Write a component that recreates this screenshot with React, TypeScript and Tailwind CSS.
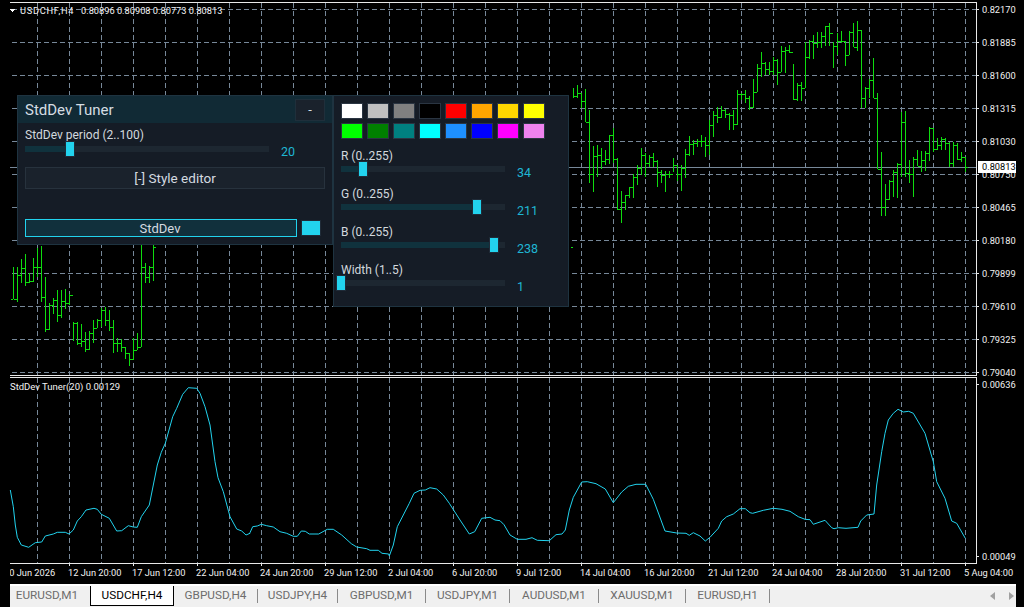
const swatches = [
  "bg-[#ffffff]", "bg-[#c0c0c0]", "bg-[#808080]", "bg-[#000000]", "bg-[#ff0000]", "bg-[#ffa500]", "bg-[#ffd700]", "bg-[#ffff00]",
  "bg-[#00ff00]", "bg-[#008000]", "bg-[#008080]", "bg-[#00ffff]", "bg-[#1e90ff]", "bg-[#0000ff]", "bg-[#ff00ff]", "bg-[#ee82ee]",
];

const prices = ["0.82170", "0.81885", "0.81600", "0.81315", "0.81030", "0.80750", "0.80465", "0.80180", "0.79899", "0.79610", "0.79325", "0.79040"];

const times = [
  "10 Jun 2026", "12 Jun 20:00", "17 Jun 12:00", "22 Jun 04:00", "24 Jun 20:00", "29 Jun 12:00", "2 Jul 04:00", "6 Jul 20:00",
  "9 Jul 12:00", "14 Jul 04:00", "16 Jul 20:00", "21 Jul 12:00", "24 Jul 04:00", "28 Jul 20:00", "31 Jul 12:00", "5 Aug 04:00",
];

const tabs = [
  { name: "EURUSD,M1", width: "w-[80px] pr-[6px]" },
  { name: "USDCHF,H4", width: "w-[84px]", active: true },
  { name: "GBPUSD,H4", width: "w-[84px]", sep: true },
  { name: "USDJPY,H4", width: "w-[80px]", sep: true },
  { name: "GBPUSD,M1", width: "w-[88px]", sep: true },
  { name: "USDJPY,M1", width: "w-[84px]", sep: true },
  { name: "AUDUSD,M1", width: "w-[89px]", sep: true },
  { name: "XAUUSD,M1", width: "w-[87px]", sep: true },
  { name: "EURUSD,H1", width: "w-[84px]", sep: true },
];

// bars traced from 3x crops: [x, high, low, close]
const trace = (ox: number, oy: number, rows: number[][]) =>
  rows.map(([x, h, l, c]) => [Math.round(ox + x / 3), Math.round(oy + h / 3), Math.round(oy + l / 3), Math.round(oy + c / 3)]);

const bars = [
  ...trace(0, 240, [
    [40, 80, 178, 178], [52, 80, 185, 105], [64, 57, 128, 85], [76, 42, 137, 125], [88, 100, 130, 122], [100, 55, 125, 82],
    [112, 25, 110, 80], [124, 18, 185, 172], [136, 110, 275, 268], [148, 190, 270, 195], [160, 175, 222, 180], [172, 150, 245, 225],
    [184, 150, 235, 182], [196, 147, 208, 188], [208, 162, 195, 165], [220, 245, 302, 248], [232, 247, 315, 310], [244, 252, 322, 302],
    [256, 277, 337, 328], [268, 272, 330, 280], [280, 240, 310, 263], [292, 238, 265, 240], [304, 205, 260, 210], [316, 200, 258, 240],
    [328, 210, 272, 262], [340, 240, 338, 308], [352, 295, 335, 308], [364, 298, 335, 322], [376, 322, 358, 340], [388, 338, 378, 358],
    [400, 295, 360, 330], [412, 278, 330, 320], [424, 15, 320, 82], [436, 68, 128, 112], [448, 78, 128, 82], [460, 15, 122, 20],
  ]),
  ...trace(570, 20, [
    [10, 205, 235, 228], [22, 195, 235, 220], [34, 220, 265, 243], [46, 207, 307, 307], [58, 270, 490, 462], [70, 378, 515, 408],
    [82, 375, 470, 406], [94, 385, 447, 423], [106, 390, 435, 418], [118, 345, 432, 345], [130, 325, 430, 418], [142, 415, 570, 567],
    [154, 513, 608, 545], [166, 525, 570, 525], [178, 500, 533, 502], [190, 462, 533, 472], [202, 435, 495, 445], [214, 385, 465, 405],
    [226, 400, 470, 428], [238, 405, 440, 412], [250, 400, 440, 422], [262, 420, 500, 455], [274, 450, 488, 465], [286, 453, 515, 462],
    [298, 452, 475, 462], [310, 415, 455, 435], [322, 435, 483, 463], [334, 435, 513, 445], [346, 388, 475, 403], [358, 348, 407, 372],
    [370, 360, 405, 370], [382, 357, 380, 362], [394, 345, 380, 362], [406, 350, 410, 376], [418, 300, 405, 316], [430, 273, 350, 286],
    [442, 262, 310, 290], [454, 258, 295, 270], [466, 268, 295, 282], [478, 280, 330, 285], [490, 270, 330, 312], [502, 210, 315, 222],
    [514, 220, 240, 222], [526, 210, 250, 235], [538, 228, 270, 260], [550, 178, 265, 215], [562, 133, 215, 145], [574, 97, 170, 130],
    [586, 125, 165, 148], [598, 125, 165, 152], [610, 110, 165, 120], [622, 118, 195, 155], [634, 78, 155, 92], [646, 82, 160, 90],
    [658, 75, 98, 95], [670, 132, 240, 238], [682, 190, 242, 195], [694, 185, 242, 205], [706, 67, 205, 112], [718, 60, 118, 62],
    [730, 45, 118, 70], [742, 37, 85, 65], [754, 37, 85, 48], [766, 18, 78, 18], [778, 10, 78, 40], [790, 65, 143, 78],
    [802, 40, 105, 62], [814, 33, 70, 62], [826, 62, 138, 105], [838, 33, 105, 35], [850, 10, 80, 80], [862, 3, 92, 30],
  ]),
  ...trace(860, 0, [
    [4, 90, 325, 295], [16, 260, 325, 265], [28, 238, 295, 240], [40, 175, 295, 295], [52, 278, 507, 507], [64, 457, 648, 620],
    [76, 552, 648, 597], [88, 540, 600, 542], [100, 510, 592, 515], [112, 490, 595, 492], [124, 335, 530, 367], [136, 333, 532, 520],
    [148, 480, 548, 522], [160, 472, 590, 478], [172, 450, 497, 497], [184, 452, 515, 480], [196, 452, 512, 458], [208, 382, 482, 385],
    [220, 385, 455, 448], [232, 415, 450, 435], [244, 412, 450, 418], [256, 415, 450, 428], [268, 425, 500, 490], [280, 425, 500, 435],
    [292, 430, 480, 478], [304, 455, 485, 472], [316, 470, 517, 500],
  ]),
];

const curve = (ox: number, oy: number, rows: number[][]) => rows.map(([x, y]) => `${(ox + x / 3).toFixed(1)},${(oy + y / 3).toFixed(1)}`);

const stdDevLine = [
  ...curve(0, 375, [
    [31, 345], [40, 395], [46, 450], [52, 487], [64, 510], [86, 517], [106, 503], [125, 501], [136, 483], [160, 477], [172, 472], [196, 472],
    [207, 477], [220, 465], [232, 438], [244, 425], [258, 405], [282, 400], [292, 403], [304, 418], [328, 430], [350, 468], [365, 467],
    [385, 452], [400, 456], [412, 457], [424, 425], [448, 390], [460, 330], [472, 270], [484, 232], [496, 205], [518, 125], [530, 100],
    [548, 58], [565, 38], [590, 40], [600, 55], [615, 95], [630, 150], [645, 260], [654, 308], [670, 350], [690, 425], [710, 462],
    [725, 468], [738, 480], [750, 475],
  ]),
  ...curve(250, 460, [
    [0, 218], [8, 200], [22, 198], [34, 193], [50, 197], [70, 201], [90, 215], [110, 220], [130, 229], [142, 229], [154, 213], [166, 214],
    [178, 222], [206, 222], [232, 208], [250, 208], [275, 225], [304, 251], [320, 261], [350, 266], [360, 271], [385, 271], [396, 280],
    [416, 282], [418, 288], [430, 255], [442, 200], [460, 165], [478, 130], [492, 100], [510, 91], [526, 90], [540, 83], [560, 87],
    [580, 105], [598, 130], [630, 180], [658, 222], [674, 215], [695, 175], [720, 172], [735, 180], [750, 182],
  ]),
  ...curve(500, 460, [
    [12, 194], [30, 225], [52, 238], [78, 238], [96, 233], [112, 241], [148, 242], [168, 224], [186, 222], [196, 210], [208, 150], [220, 112],
    [245, 66], [262, 65], [288, 71], [316, 87], [340, 128], [365, 96], [385, 79], [408, 73], [437, 73], [460, 118], [495, 213], [530, 219],
    [558, 220], [568, 226], [580, 218], [600, 228], [616, 243], [630, 232], [655, 205], [665, 183], [680, 170], [700, 162], [720, 146],
    [736, 146], [750, 158],
  ]),
  ...curve(750, 375, [
    [8, 415], [40, 406], [70, 400], [96, 403], [120, 409], [145, 425], [165, 433], [180, 434], [190, 448], [225, 436], [245, 458], [252, 461],
    [265, 458], [288, 460], [324, 457], [332, 438], [350, 420], [372, 417], [380, 330], [395, 230], [405, 175], [415, 135], [430, 115],
    [444, 103], [460, 111], [476, 109], [490, 115], [525, 175], [550, 260], [560, 320], [585, 370], [605, 438], [620, 445], [646, 490],
  ]),
].join(" ");

const gridX = Array.from({ length: 30 }, (_, i) => 37.5 + i * 32);
const gridY = Array.from({ length: 12 }, (_, i) => 9.5 + i * 33);

function Slider({ width, frac }: { width: number; frac: number }) {
  return (
    <div className="relative h-[6px] shrink-0 bg-[#1d2731]" style={{ width }}>
      <div className="h-full bg-[#10323d]" style={{ width: width * frac }} />
      <div
        className="absolute -top-[5px] -ml-[5px] h-[16px] w-[10px] border border-[#1f2b38] bg-[#22d3ee]"
        style={{ left: width * frac }}
      />
    </div>
  );
}

function SliderGroup({ label, value, frac }: { label: string; value: number; frac: number }) {
  return (
    <div className="mt-[8px]">
      <p className="h-[14px] text-[12px] leading-[18px] text-[#d3d9de]">{label}</p>
      <div className="flex h-[16px] items-center">
        <Slider width={164} frac={frac} />
        <span className="ml-[12px] pt-[9px] text-[12.5px] text-[#1fb6d4]">{value}</span>
      </div>
    </div>
  );
}

function TunerPanels() {
  return (
    <div className="absolute left-[17px] top-[95px] flex items-start font-['Roboto',sans-serif]">
      <div className="flex h-[150px] w-[316px] flex-col border border-[#1e3340] bg-[#151c26]">
        <div className="flex h-[27px] shrink-0 items-center justify-between bg-[#112a35] px-[7px]">
          <span className="pt-[2px] text-[15px] text-[#d5dde3]">StdDev Tuner</span>
          <div className="flex h-[22px] w-[30px] items-center justify-center border border-[#1f2f3b] bg-[#1a222c] text-[13px] text-[#d5dde3]">-</div>
        </div>
        <div className="px-[7px]">
          <p className="mt-[5px] h-[13px] text-[12px] leading-[14px] text-[#d3d9de]">StdDev period (2..100)</p>
          <div className="flex h-[16px] items-center">
            <Slider width={244} frac={18 / 98} />
            <span className="ml-[12px] pt-[7px] text-[12.5px] text-[#1fb6d4]">20</span>
          </div>
          <div className="mt-[10px] flex h-[22px] items-center justify-center border border-[#27323d] bg-[#1a222c] text-[13.5px] text-[#d5dbe0]">
            [-] Style editor
          </div>
          <div className="mt-[30px] flex items-center">
            <div className="flex h-[18px] w-[272px] items-center justify-center border border-[#22d3ee] bg-[#11303c] pt-[1px] pr-[2px] text-[13px] text-[#d5dbe0]">
              StdDev
            </div>
            <div className="ml-[4px] h-[16px] w-[20px] border border-[#1f2b38] bg-[#22d3ee]" />
          </div>
        </div>
      </div>
      <div className="h-[212px] w-[236px] border border-[#1e3340] bg-[#151c26] px-[7px] pt-[7px]">
        <div className="grid w-[204px] grid-cols-8 gap-[4px]">
          {swatches.map((color) => (
            <div key={color} className={`h-[16px] w-[22px] border border-[#2a3542] ${color}`} />
          ))}
        </div>
        <div className="mt-[2px]">
          <SliderGroup label="R (0..255)" value={34} frac={34 / 255} />
          <SliderGroup label="G (0..255)" value={211} frac={211 / 255} />
          <SliderGroup label="B (0..255)" value={238} frac={238 / 255} />
          <SliderGroup label="Width (1..5)" value={1} frac={0} />
        </div>
      </div>
    </div>
  );
}

function MainChart() {
  return (
    <svg width={980} height={376} viewBox="0 0 980 376" className="block shrink-0" shapeRendering="crispEdges">
      {gridX.map((x) => (
        <line key={x} x1={x} x2={x} y1={3} y2={375} stroke="#778899" strokeDasharray="5 3" />
      ))}
      {gridY.map((y) => (
        <line key={y} x1={12} x2={976} y1={y} y2={y} stroke="#778899" strokeDasharray="5 3" />
      ))}
      <line x1={10} x2={976} y1={167.5} y2={167.5} stroke="#778899" />
      {bars.map(([x, high, low, close], i) => {
        const open = i > 0 ? bars[i - 1][3] : close;
        return (
          <g key={i} fill="#0fdc0f">
            <rect x={x} y={high} width={1} height={low - high} />
            <rect x={x - 2} y={open} width={2} height={1} />
            <rect x={x + 1} y={close} width={2} height={1} />
          </g>
        );
      })}
      <line x1={10} x2={977} y1={2.5} y2={2.5} stroke="#e8e8e8" />
      <line x1={976.5} x2={976.5} y1={2} y2={376} stroke="#e8e8e8" />
      <line x1={10} x2={977} y1={375.5} y2={375.5} stroke="#e8e8e8" />
      {gridY.map((y) => (
        <line key={y} x1={977} x2={979} y1={y} y2={y} stroke="#e8e8e8" />
      ))}
      <path d="M10 9h5l-2.5 3.5z" fill="#ffffff" stroke="none" />
    </svg>
  );
}

function IndicatorChart() {
  return (
    <svg width={980} height={190} viewBox="0 376 980 190" className="block shrink-0">
      <g shapeRendering="crispEdges">
        {gridX.map((x) => (
          <line key={x} x1={x} x2={x} y1={378} y2={563} stroke="#778899" strokeDasharray="5 3" />
        ))}
        <line x1={10} x2={977} y1={377.5} y2={377.5} stroke="#e8e8e8" />
        <line x1={976.5} x2={976.5} y1={377} y2={564} stroke="#e8e8e8" />
        <line x1={10} x2={977} y1={563.5} y2={563.5} stroke="#e8e8e8" />
        {gridX.filter((_, i) => i % 2 === 1).map((x) => (
          <line key={x} x1={x} x2={x} y1={564} y2={566} stroke="#e8e8e8" />
        ))}
        <line x1={977} x2={979} y1={384.5} y2={384.5} stroke="#e8e8e8" />
        <line x1={977} x2={979} y1={556.5} y2={556.5} stroke="#e8e8e8" />
      </g>
      <polyline points={stdDevLine} fill="none" stroke="#22d3ee" strokeWidth={1} />
    </svg>
  );
}

export default function App() {
  return (
    <div className="flex h-[607px] w-[1024px] flex-col overflow-hidden bg-black font-['Roboto',sans-serif] text-[9.25px] text-[#f2f2f2]">
      <div className="relative flex h-[376px] shrink-0">
        <MainChart />
        <div className="flex flex-col gap-[20px] pl-[2px] pt-[3px]">
          {prices.map((price) => (
            <span key={price} className="h-[13px] leading-[13px]">{price}</span>
          ))}
        </div>
        <p className="absolute left-[20px] top-[4px] flex whitespace-pre leading-[13px]">
          <span className="w-[61px] tracking-[0.7px]">USDCHF,H4</span>
          <span>0.80896 0.80908 0.80773 0.80813</span>
        </p>
        <span className="absolute left-[978px] top-[161px] h-[12px] w-[38px] bg-white pl-[4px] leading-[12px] text-black">0.80813</span>
        <TunerPanels />
      </div>
      <div className="relative flex h-[190px] shrink-0">
        <IndicatorChart />
        <div className="flex flex-col justify-between pb-[3px] pl-[2px] pt-[2px]">
          <span className="h-[13px] leading-[13px]">0.00636</span>
          <span className="h-[13px] leading-[13px]">0.00049</span>
        </div>
        <p className="absolute left-[10px] top-[4px] text-[9.5px] leading-[13px]">StdDev Tuner(20) 0.00129</p>
      </div>
      <div className="ml-[10px] flex h-[18px] w-[1014px] shrink-0 overflow-hidden">
        {times.map((time, i) => (
          <span key={time} className={`w-[64px] shrink-0 whitespace-nowrap leading-[14px] ${i === 0 ? "-ml-[6px]" : ""}`}>{time}</span>
        ))}
      </div>
      <div className="ml-[10px] flex h-[23px] w-[1006px] shrink-0 items-start border-t-2 border-[#ffffff] bg-[#f0f0f0] text-[11.75px] text-[#6d6d6d]">
        {tabs.map((tab) =>
          tab.active ? (
            <div key={tab.name} className={`flex h-[20px] items-center justify-center border-x border-b border-black bg-white text-black ${tab.width}`}>
              {tab.name}
            </div>
          ) : (
            <div key={tab.name} className={`flex h-[20px] items-center ${tab.width}`}>
              <span className={`flex h-[14px] w-full items-center justify-center ${tab.sep ? "border-r border-[#8a8a8a]" : ""}`}>{tab.name}</span>
            </div>
          ),
        )}
        <div className="ml-auto mr-[2px] flex h-[20px] items-center gap-[14px]">
          <svg width={5} height={8} viewBox="0 0 5 8"><path d="M5 0v8L0 4z" fill="#a0a0a0" /></svg>
          <svg width={5} height={8} viewBox="0 0 5 8"><path d="M0 0v8l5-4z" fill="#a0a0a0" /></svg>
        </div>
      </div>
    </div>
  );
}
